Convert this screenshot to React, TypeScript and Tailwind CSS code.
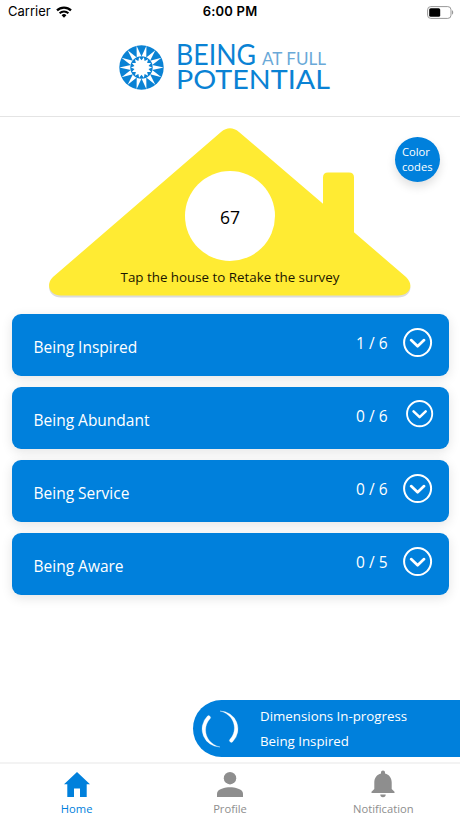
import React from 'react';

const dimensions = [
  { name: 'Being Inspired', score: '1 / 6', icon: 'mt-[14px] mr-[16px] ml-[15px] size-[30px]' },
  { name: 'Being Abundant', score: '0 / 6', icon: 'mt-[13px] mr-[15px] ml-[18px] size-[28px]' },
  { name: 'Being Service', score: '0 / 6', icon: 'mt-[14px] mr-[16px] ml-[15px] size-[30px]' },
  { name: 'Being Aware', score: '0 / 5', icon: 'mt-[14px] mr-[16px] ml-[15px] size-[30px]' },
];

// star outline with `count` spikes, centred on 0,0
function star(count: number, outer: number, inner: number) {
  const points: string[] = [];
  for (let i = 0; i < count * 2; i++) {
    const r = i % 2 ? inner : outer;
    const a = ((i + 1) * Math.PI) / count - Math.PI / 2;
    points.push(`${(r * Math.cos(a)).toFixed(2)},${(r * Math.sin(a)).toFixed(2)}`);
  }
  return points.join(' ');
}

function StatusBar() {
  return (
    <div className="grid h-6 grid-cols-3 items-center pr-[6px] pl-[8px] font-['Inter',sans-serif] text-[13px] text-black">
      <div className="flex items-center gap-[5px]">
        <span>Carrier</span>
        <svg viewBox="0 0 16 12" className="h-[12px] w-[16px]">
          <path d="M1 4.4a10 10 0 0 1 14 0" fill="none" stroke="#000" strokeWidth="2.2" />
          <path d="M3.6 7.2a6.3 6.3 0 0 1 8.8 0" fill="none" stroke="#000" strokeWidth="2" />
          <path d="M8 11.8 5.6 9.3a3.4 3.4 0 0 1 4.8 0Z" />
        </svg>
      </div>
      <span className="-ml-[2px] text-center font-semibold tracking-[0.2px]">6:00 PM</span>
      <svg viewBox="0 0 27 13" className="h-[13px] w-[27px] justify-self-end">
        <rect x="0.6" y="0.6" width="23.4" height="11.8" rx="3.2" fill="none" stroke="#999" strokeWidth="1" />
        <rect x="2.2" y="2.2" width="11" height="8.6" rx="1.6" />
        <path d="M25 4.3c1.6.5 1.6 3.9 0 4.4Z" fill="#999" />
      </svg>
    </div>
  );
}

function Logo() {
  return (
    <svg viewBox="0 0 216 52" className="h-[52px] w-[216px] overflow-visible">
      <g transform="translate(23.5 27.5)">
        <circle r="22.2" fill="#0a82d4" />
        <polygon points={star(14, 22.2, 11)} fill="#fff" />
        <circle r="11.2" fill="#0a82d4" />
        <polygon points={star(14, 10.6, 7.2)} fill="#fff" />
      </g>
      <g fontFamily="Lato, sans-serif" fill="#0a82d4">
        <text x="58" y="25" fontSize="28.5" textLength="80" lengthAdjust="spacingAndGlyphs">BEING</text>
        <text x="144" y="24.5" fontSize="17" fill="#6aa9d8" textLength="64" lengthAdjust="spacingAndGlyphs">AT FULL</text>
        <text x="58" y="49" fontSize="27.5" textLength="154" lengthAdjust="spacingAndGlyphs">POTENTIAL</text>
      </g>
    </svg>
  );
}

function House() {
  const shape =
    'M172 4.5Q181 -3 190 4.5L274 76.3V50Q274 45 279 45H300Q305 45 305 50V104.8L357 149.5C366 158 360 168 349 168H12C1 168 -4 157 4 149.5Z';
  return (
    <svg viewBox="0 0 362 172" className="h-[172px] w-[362px] overflow-visible">
      <path d={shape} fill="#dcdcdc" transform="translate(0 1.5)" />
      <path d={shape} fill="#ffeb33" transform="translate(0 -0.5)" />
      <circle cx="181" cy="88" r="45" fill="#fff" />
    </svg>
  );
}

function ChevronCircle({ className }: { className: string }) {
  return (
    <svg viewBox="0 0 30 30" className={`shrink-0 ${className}`} fill="none" stroke="#fff">
      <circle cx="14.6" cy="14.6" r="13.5" strokeWidth="2" />
      <path d="m8.1 12.1 6.5 6.2 6.5-6.2" strokeWidth="2.7" strokeLinecap="round" strokeLinejoin="round" />
    </svg>
  );
}

function Spinner() {
  // tapered arc, thin at the top and round at the lower end
  const arc = 'M19 1A18 18 0 0 1 31.7 31.7A1.8 1.8 0 0 1 29 29.2C37.5 20 33.5 4.5 19 1Z';
  return (
    <svg viewBox="0 0 38 38" className="size-[38px]" fill="#fff" stroke="#fff" strokeWidth="0.3">
      <path d={arc} />
      <path d={arc} transform="rotate(180 19 19)" />
    </svg>
  );
}

function TabBar() {
  return (
    <nav className="grid h-[56px] grid-cols-3 border-t-2 border-[#f3f3f3] bg-white text-[11.2px] leading-[15px] text-[#8e8e8e]">
      <div className="flex flex-col items-center text-[#0080dc]">
        <svg viewBox="0 0 26 26" className="mt-[8px] h-[26px] w-[26px]" fill="currentColor">
          <path d="M13 0 26 12.2H22.7V25H16V16.5H10V25H3.3V12.2H0Z" />
        </svg>
        <span className="mt-[3px]">Home</span>
      </div>
      <div className="flex flex-col items-center">
        <svg viewBox="0 0 26 26" className="mt-[8px] h-[26px] w-[26px]" fill="currentColor">
          <circle cx="13" cy="6.2" r="6.2" />
          <path d="M0 25V21.5C0 17 8.5 15.3 13 15.3S26 17 26 21.5V25Z" />
        </svg>
        <span className="mt-[3px]">Profile</span>
      </div>
      <div className="flex flex-col items-center">
        <svg viewBox="0 0 24 28" className="mt-[6px] h-[28px] w-[24px]" fill="currentColor">
          <path d="M12 .5c1.2 0 2 .9 2 2v1c4.2 1 6.7 4.5 6.7 8.8V19l2.8 2.7V23H.5v-1.3L3.3 19v-6.7C3.3 8 5.8 4.5 10 3.5v-1c0-1.1.8-2 2-2ZM9.3 24.5h5.4a2.7 2.7 0 0 1-5.4 0Z" />
        </svg>
        <span className="mt-[3px]">Notification</span>
      </div>
    </nav>
  );
}

export default function App() {
  return (
    <div className="flex h-[818px] w-[460px] flex-col overflow-hidden bg-white font-['Open_Sans',sans-serif]">
      <header className="h-[117px] border-b border-[#e4e4e4]">
        <StatusBar />
        <div className="flex pt-[16px] pl-[118px]">
          <Logo />
        </div>
      </header>

      <main className="relative flex-1">
        {/* House score */}
        <div className="relative flex h-[196px] justify-center pt-[11px]">
          <House />
          <span className="absolute top-[87px] text-[17.5px] leading-[26px] text-black">67</span>
          <span className="absolute top-[151px] text-[13.35px] leading-[18px] whitespace-nowrap text-[#1a1500]">
            Tap the house to Retake the survey
          </span>
          <button className="absolute top-[19.5px] right-[20px] size-[45px] rounded-full bg-[#0080dc] pb-[1px] pl-[7px] text-left text-[11.2px] leading-[15px] text-white shadow-[0_5px_10px_rgba(0,0,0,0.12)]">
            Color
            <br />
            codes
          </button>
        </div>

        {/* Dimensions */}
        <div className="flex flex-col gap-[11.3px] px-[11.5px] pt-[0.5px]">
          {dimensions.map((item) => (
            <div
              key={item.name}
              className="flex h-[62px] items-start rounded-[9px] bg-[#0080dc] pl-[22px] text-[15.5px] leading-[22px] text-white shadow-[0_3px_12px_rgba(0,0,0,0.11)]"
            >
              <span className="mt-[22px] flex-1">{item.name}</span>
              <span className="mt-[18px]">{item.score}</span>
              <ChevronCircle className={item.icon} />
            </div>
          ))}
        </div>

        {/* In-progress banner */}
        <div className="absolute right-0 bottom-[5px] flex h-[57px] w-[267px] items-center rounded-l-full bg-[#0080dc] pl-[8px] text-white">
          <Spinner />
          <div className="ml-[21px] text-[13.3px] leading-[24.5px]">
            <p>Dimensions In-progress</p>
            <p>Being Inspired</p>
          </div>
        </div>
      </main>

      <TabBar />
    </div>
  );
}
